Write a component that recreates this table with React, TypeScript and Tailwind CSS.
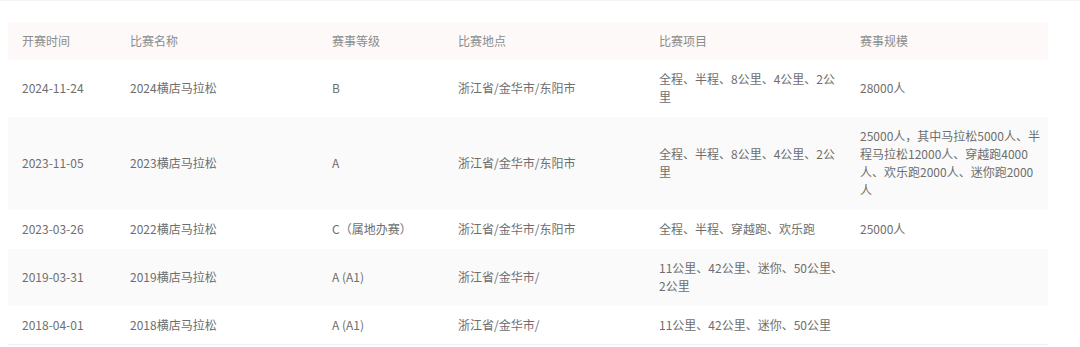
import React from "react";

type Row = {
  date: string;
  name: string;
  level: string;
  place: string;
  items: string[];
  scale: string[];
  striped: boolean;
};

const rows: Row[] = [
  {
    date: "2024-11-24",
    name: "2024横店马拉松",
    level: "B",
    place: "浙江省/金华市/东阳市",
    items: ["全程、半程、8公里、4公里、2公", "里"],
    scale: ["28000人"],
    striped: false,
  },
  {
    date: "2023-11-05",
    name: "2023横店马拉松",
    level: "A",
    place: "浙江省/金华市/东阳市",
    items: ["全程、半程、8公里、4公里、2公", "里"],
    scale: [
      "25000人，其中马拉松5000人、半",
      "程马拉松12000人、穿越跑4000",
      "人、欢乐跑2000人、迷你跑2000",
      "人",
    ],
    striped: true,
  },
  {
    date: "2023-03-26",
    name: "2022横店马拉松",
    level: "C（属地办赛）",
    place: "浙江省/金华市/东阳市",
    items: ["全程、半程、穿越跑、欢乐跑"],
    scale: ["25000人"],
    striped: false,
  },
  {
    date: "2019-03-31",
    name: "2019横店马拉松",
    level: "A (A1)",
    place: "浙江省/金华市/",
    items: ["11公里、42公里、迷你、50公里、", "2公里"],
    scale: [],
    striped: true,
  },
  {
    date: "2018-04-01",
    name: "2018横店马拉松",
    level: "A (A1)",
    place: "浙江省/金华市/",
    items: ["11公里、42公里、迷你、50公里"],
    scale: [],
    striped: false,
  },
];

const grid = "grid grid-cols-[108px_202px_126px_201px_201px_202px]";
const cell = "px-[14px] py-[10px] flex flex-col justify-center";

function Lines({ lines }: { lines: string[] }) {
  return (
    <>
      {lines.map((l, i) => (
        <span key={i} className="whitespace-nowrap">
          {l}
        </span>
      ))}
    </>
  );
}

export default function App() {
  return (
    <div
      className="w-[1080px] h-[347px] bg-white border-t border-[#f3f3f3] pt-[21px] pl-[8px] text-[12px] leading-[18px]"
      style={{ fontFamily: '"Noto Sans CJK SC", "Noto Sans", sans-serif' }}
    >
      <div className="w-[1040px]">
        <div className={`${grid} bg-[#fdf9f8] text-[#8c8c8c]`}>
          {["开赛时间", "比赛名称", "赛事等级", "比赛地点", "比赛项目", "赛事规模"].map((h) => (
            <div key={h} className={cell}>
              <span className="whitespace-nowrap">{h}</span>
            </div>
          ))}
        </div>
        {rows.map((r, i) => (
          <div
            key={r.date}
            className={`${grid} text-[#6e6e6e] border-b ${
              r.striped ? "bg-[#fafafa]" : "bg-white"
            } ${i === rows.length - 1 ? "border-[#eef0f5]" : r.striped ? "border-[#fafafa]" : "border-white"}`}
          >
            <div className={cell}>
              <span className="whitespace-nowrap">{r.date}</span>
            </div>
            <div className={cell}>
              <span className="whitespace-nowrap">{r.name}</span>
            </div>
            <div className={cell}>
              <span className="whitespace-nowrap">{r.level}</span>
            </div>
            <div className={cell}>
              <span className="whitespace-nowrap">{r.place}</span>
            </div>
            <div className={cell}>
              <Lines lines={r.items} />
            </div>
            <div className={cell}>
              <Lines lines={r.scale} />
            </div>
          </div>
        ))}
      </div>
    </div>
  );
}
